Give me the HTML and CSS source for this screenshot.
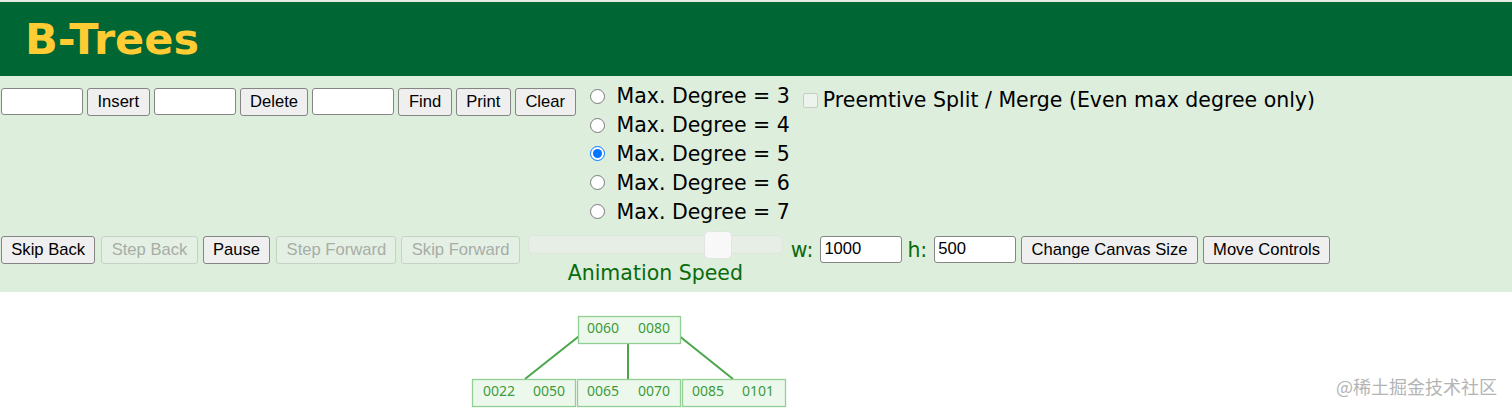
FILE: index.html
```html
<!DOCTYPE html>
<html lang="en">

<head>
    <meta charset="UTF-8">
    <meta name="viewport" content="width=device-width, initial-scale=1.0">
    <title>B-Trees</title>
    <link rel="stylesheet" href="styles.css">
</head>

<body>
    <div class="header">
        <h1>B-Trees</h1>
    </div>

    <div class="panel">
        <div class="top-row">
            <div class="ops">
                <input type="text" class="field">
                <button class="btn">Insert</button>
                <input type="text" class="field">
                <button class="btn">Delete</button>
                <input type="text" class="field">
                <button class="btn">Find</button>
                <button class="btn">Print</button>
                <button class="btn">Clear</button>
            </div>

            <div class="degrees">
                <label class="degree"><input type="radio" name="degree"> Max. Degree = 3</label>
                <label class="degree"><input type="radio" name="degree"> Max. Degree = 4</label>
                <label class="degree"><input type="radio" name="degree" checked> Max. Degree = 5</label>
                <label class="degree"><input type="radio" name="degree"> Max. Degree = 6</label>
                <label class="degree"><input type="radio" name="degree"> Max. Degree = 7</label>
            </div>

            <label class="preempt"><input type="checkbox" disabled> Preemtive Split / Merge (Even max degree only)</label>
        </div>

        <div class="anim-row">
            <button class="btn">Skip Back</button>
            <button class="btn" disabled>Step Back</button>
            <button class="btn">Pause</button>
            <button class="btn" disabled>Step Forward</button>
            <button class="btn" disabled>Skip Forward</button>

            <div class="speed">
                <input type="range" class="speed-slider" min="0" max="100" value="78">
                <span class="speed-label">Animation Speed</span>
            </div>

            <span class="size-label">w:</span>
            <input type="text" class="field" value="1000">
            <span class="size-label">h:</span>
            <input type="text" class="field" value="500">
            <button class="btn">Change Canvas Size</button>
            <button class="btn">Move Controls</button>
        </div>
    </div>

    <div class="canvas">
        <svg class="tree" width="1512" height="121" viewBox="0 0 1512 121">
            <g class="edges">
                <line x1="583" y1="41" x2="525" y2="87"></line>
                <line x1="628" y1="38" x2="628" y2="87"></line>
                <line x1="673" y1="39" x2="733" y2="87"></line>
            </g>
            <g class="nodes">
                <rect x="578.5" y="24.5" width="102" height="27"></rect>
                <rect x="472.5" y="87.5" width="103" height="27"></rect>
                <rect x="577.5" y="87.5" width="103" height="27"></rect>
                <rect x="682.5" y="87.5" width="103" height="27"></rect>
            </g>
            <g class="keys">
                <text x="603" y="41">0060</text>
                <text x="654" y="41">0080</text>
                <text x="499" y="104">0022</text>
                <text x="549" y="104">0050</text>
                <text x="603" y="104">0065</text>
                <text x="654" y="104">0070</text>
                <text x="708" y="104">0085</text>
                <text x="758" y="104">0101</text>
            </g>
        </svg>
        <span class="watermark">@稀土掘金技术社区</span>
    </div>
</body>

</html>
```

FILE: styles.css
```css
body {
    margin: 0;
    font-family: "DejaVu Sans", Verdana, sans-serif;
    background-color: #fff;
}

.header {
    height: 74px;
    border-top: 2px solid #e4ece4;
    background-color: #006633;
    display: flex;
    align-items: center;
    padding-left: 25px;
}

.header h1 {
    margin: 0;
    font-size: 43px;
    font-weight: bold;
    color: #ffcc33;
    line-height: 48px;
}

.panel {
    background-color: #ddeedd;
    padding: 6px 0 7px 0;
}

.top-row {
    display: flex;
    align-items: flex-start;
}

.ops {
    display: flex;
    gap: 4px;
    margin-top: 6px;
    padding-left: 1px;
}

.field {
    width: 82px;
    height: 27px;
    box-sizing: border-box;
    border: 1px solid #858585;
    border-radius: 3px;
    background-color: #fff;
    padding: 1px 3px;
    font-family: "Liberation Sans", Arial, sans-serif;
    font-size: 16.6px;
    color: #000;
}

.btn {
    height: 28px;
    box-sizing: border-box;
    padding: 0 9.3px;
    border: 1px solid #858585;
    border-radius: 3px;
    background-color: #efefef;
    font-family: "Liberation Sans", Arial, sans-serif;
    font-size: 16.6px;
    color: #000;
    cursor: pointer;
}

.ops .btn {
    padding: 0 9.5px;
}

.btn:disabled {
    color: #a7ada7;
    background-color: #e4f0e4;
    border-color: #c6d2c6;
    cursor: default;
}

.degrees {
    display: flex;
    flex-direction: column;
    margin-left: 14px;
}

.degree {
    display: flex;
    align-items: center;
    height: 28.8px;
    font-size: 20.5px;
    color: #000;
}

.degree input {
    width: 15px;
    height: 15px;
    margin: 0 12px 0 0;
}

.preempt {
    display: flex;
    align-items: center;
    margin: 6px 0 0 13px;
    font-size: 20.5px;
    color: #000;
}

.preempt input {
    width: 15px;
    height: 15px;
    margin: 0 5px 0 0;
}

.anim-row {
    display: flex;
    align-items: flex-start;
    gap: 5px;
    margin-top: 10px;
    padding-left: 1px;
}

.anim-row .btn:nth-child(2),
.anim-row .btn:nth-child(4) {
    margin-left: 1px;
}

.speed {
    display: flex;
    flex-direction: column;
    align-items: center;
    margin: -5px 3px 0 3px;
}

.speed-slider {
    -webkit-appearance: none;
    appearance: none;
    width: 255px;
    height: 28px;
    margin: 0;
    background: transparent;
}

.speed-slider::-webkit-slider-runnable-track {
    height: 19px;
    border-radius: 5px;
    background-color: #e6eee6;
    border: 1px solid #dde6dd;
}

.speed-slider::-webkit-slider-thumb {
    -webkit-appearance: none;
    width: 28px;
    height: 28px;
    margin-top: -5px;
    border-radius: 5px;
    background-color: #f7f8f7;
    border: 1px solid #e2e6e2;
}

.speed-label {
    margin-top: 2px;
    font-size: 20.5px;
    line-height: 24px;
    color: #0b6b0b;
}

.size-label {
    margin-right: 2px;
    font-size: 20.5px;
    line-height: 28px;
    color: #0b6b0b;
}

.canvas {
    position: relative;
    height: 121px;
}

.tree {
    display: block;
}

.edges line {
    stroke: #4aa64a;
    stroke-width: 2;
}

.nodes rect {
    fill: #ecf8ec;
    stroke: #92cf92;
    stroke-width: 1.3;
}

.keys text {
    font-family: "Noto Sans", "Open Sans", sans-serif;
    font-size: 14px;
    fill: #3d9b3d;
    text-anchor: middle;
}

.watermark {
    position: absolute;
    right: 15px;
    bottom: 14px;
    font-family: "Noto Sans CJK SC", sans-serif;
    font-size: 18px;
    color: #b4b4b4;
}
```
